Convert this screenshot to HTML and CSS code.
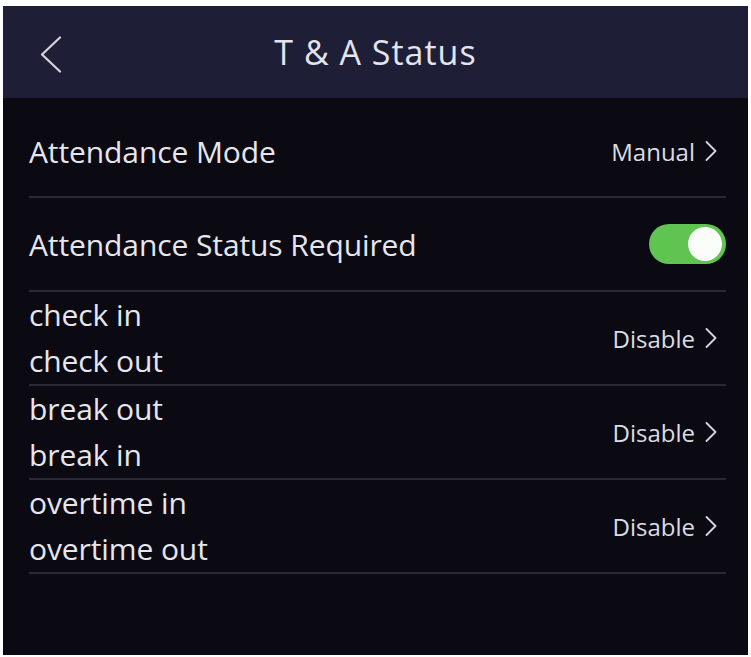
FILE: index.html
```html
<!DOCTYPE html>
<html lang="en">
<head>
  <meta charset="UTF-8">
  <meta name="viewport" content="width=device-width, initial-scale=1.0">
  <title>T &amp; A Status</title>
  <link rel="stylesheet" href="styles.css">
</head>
<body>
  <div class="screen">
    <header class="topbar">
      <button class="back" aria-label="Back">
        <svg width="22" height="37" viewBox="0 0 22 37"><polyline points="20,1.5 2,18.5 20,35.5" fill="none" stroke="#d4d4dc" stroke-width="2.2" stroke-linejoin="round" stroke-linecap="round"/></svg>
      </button>
      <h1 class="title">T &amp; A Status</h1>
    </header>

    <ul class="list">
      <li class="row row-first">
        <div class="label">Attendance Mode</div>
        <div class="value">Manual <svg class="chev" width="12" height="20" viewBox="0 0 12 20"><polyline points="1.5,1 10.5,10 1.5,19" fill="none" stroke="#d6d6de" stroke-width="1.8" stroke-linecap="round" stroke-linejoin="round"/></svg></div>
      </li>
      <li class="row">
        <div class="label">Attendance Status Required</div>
        <div class="toggle on"><span class="knob"></span></div>
      </li>
      <li class="row row-double">
        <div class="label"><span>check in</span><span>check out</span></div>
        <div class="value">Disable <svg class="chev" width="12" height="20" viewBox="0 0 12 20"><polyline points="1.5,1 10.5,10 1.5,19" fill="none" stroke="#d6d6de" stroke-width="1.8" stroke-linecap="round" stroke-linejoin="round"/></svg></div>
      </li>
      <li class="row row-double">
        <div class="label"><span>break out</span><span>break in</span></div>
        <div class="value">Disable <svg class="chev" width="12" height="20" viewBox="0 0 12 20"><polyline points="1.5,1 10.5,10 1.5,19" fill="none" stroke="#d6d6de" stroke-width="1.8" stroke-linecap="round" stroke-linejoin="round"/></svg></div>
      </li>
      <li class="row row-double">
        <div class="label"><span>overtime in</span><span>overtime out</span></div>
        <div class="value">Disable <svg class="chev" width="12" height="20" viewBox="0 0 12 20"><polyline points="1.5,1 10.5,10 1.5,19" fill="none" stroke="#d6d6de" stroke-width="1.8" stroke-linecap="round" stroke-linejoin="round"/></svg></div>
      </li>
    </ul>
  </div>
</body>
</html>
```

FILE: styles.css
```css
body {
  margin: 0;
  background: #ffffff;
  font-family: 'Open Sans', 'Noto Sans', sans-serif;
}
.screen {
  margin: 6px 3px 0 3px;
  height: 649px;
  background: #0b0a13;
  color: #e6e6ec;
}
.topbar {
  position: relative;
  height: 92px;
  background: #1f1e37;
  display: flex;
  align-items: center;
  justify-content: center;
}
.back {
  position: absolute;
  left: 37px;
  top: 30px;
  background: none;
  border: none;
  padding: 0;
  cursor: pointer;
}
.back svg {
  display: block;
}
.title {
  margin: 0;
  font-size: 34px;
  font-weight: 400;
  letter-spacing: 1px;
  color: #e4e4ec;
}
.list {
  list-style: none;
  margin: 0;
  padding: 0 22px 0 26px;
}
.row {
  display: flex;
  align-items: center;
  justify-content: space-between;
  height: 92px;
  border-bottom: 2px solid #2a2935;
  font-size: 30px;
  letter-spacing: -0.1px;
}
.row-first {
  height: 90px;
  padding-top: 8px;
}
.row-double .label {
  display: flex;
  flex-direction: column;
}
.row-double .label span {
  line-height: 46px;
}
.value {
  display: flex;
  align-items: center;
  font-size: 24px;
  letter-spacing: 0;
  color: #dcdce2;
  padding-right: 9px;
}
.chev {
  display: block;
  margin-left: 10px;
}
.toggle {
  position: relative;
  width: 77px;
  height: 40px;
  border-radius: 20px;
  background: #5fc450;
}
.toggle .knob {
  position: absolute;
  right: 4px;
  top: 3px;
  width: 34px;
  height: 34px;
  border-radius: 50%;
  background: #fbfdfb;
}
```
